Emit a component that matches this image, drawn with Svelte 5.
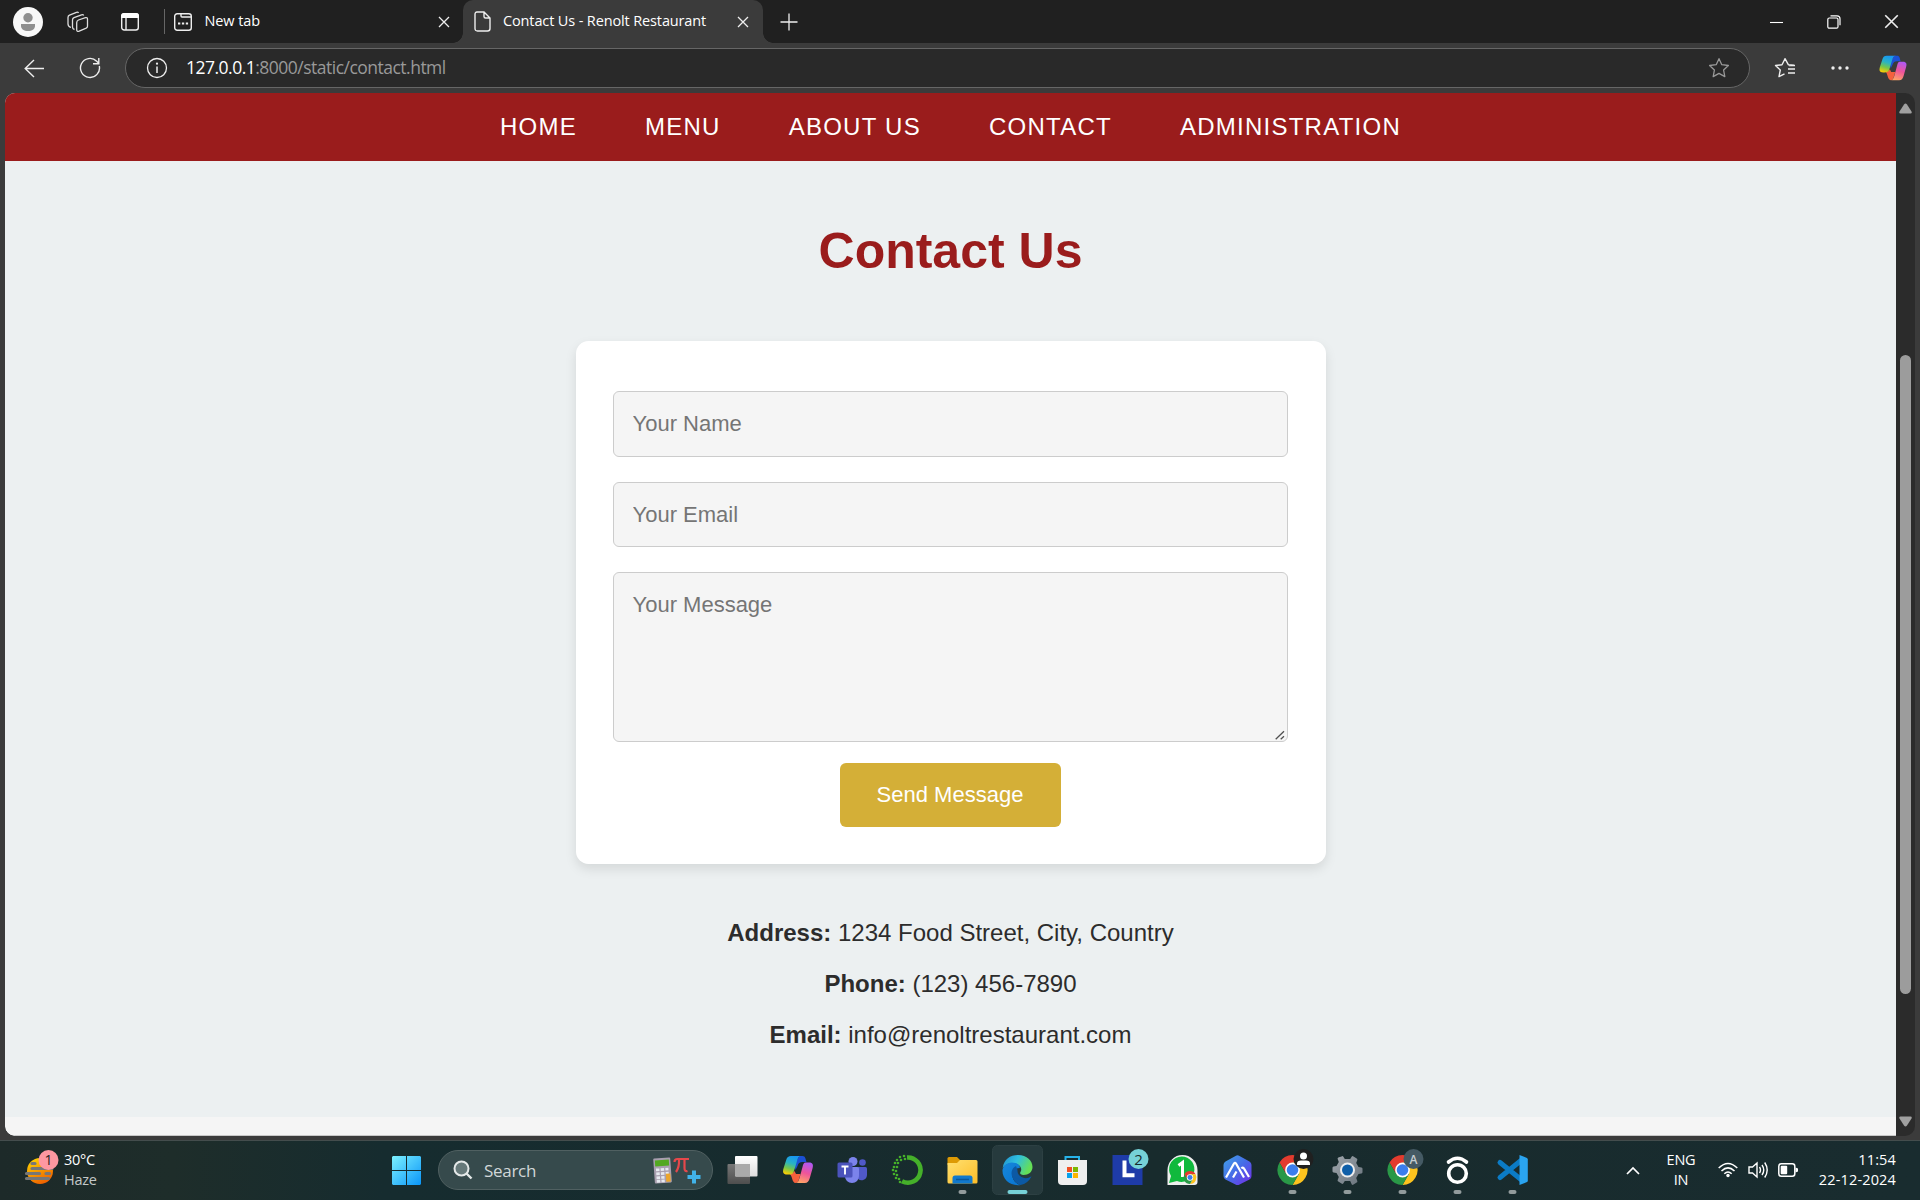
<script>
  const links = ['HOME', 'MENU', 'ABOUT US', 'CONTACT', 'ADMINISTRATION'];
  const details = [
    ['Address:', '1234 Food Street, City, Country'],
    ['Phone:', '(123) 456-7890'],
    ['Email:', 'info@renoltrestaurant.com']
  ];
  // Dots on the rotated edge of the green ring icon
  const specks = [[17, 19], [20, 16], [24, 15], [15, 22], [18, 22], [14, 26], [17, 26], [13, 29], [16, 30], [14, 33], [17, 34], [16, 37], [19, 38], [21, 19], [25, 18], [20, 41]];
</script>

{#snippet closeIcon(size)}
  <svg width={size} height={size} viewBox="0 0 12 12"><path d="M1 1l10 10M11 1L1 11" fill="none" stroke="#eee" stroke-width="1.3" /></svg>
{/snippet}

{#snippet copilot()}
  <g>
    <path d="M17 3h3c3 0 3 3 4 6H20c-3 0-4 1-5 4l-2 4-1-6z" fill="#1b50d5" />
    <path d="M7 20.500c3 0 4-1 5-2.500l1.500 3H18l-1.500 5c-1 3-1.500 4-3.500 4-3.500 0-3-7-6-9.500z" fill="#f4613d" />
    <path d="M8.500 3H19c-3 0-3.500 2-4.500 5L11.500 18C10.500 21 9 21.500 6 21.500H4.500C.5 21.500 0 19 1 15.500L3.700 7C4.600 4 6 3 8.500 3z" fill="url(#cpA)" />
    <path d="M23 9.500h3.500c4 0 4.500 2.500 3.500 6L27.300 25c-1 3.500-2.300 5-5 5H12.500c3 0 3.500-2 4.500-5l3-11c.7-3 1.300-4.500 3-4.500z" fill="url(#cpB)" />
  </g>
{/snippet}

{#snippet chrome()}
  <g transform="translate(27.5 29)">
    <path fill="#e33b2e" d="M-13-7.5A15 15 0 0 1 13-7.5H0L-6.5 3.75Z" />
    <path fill="#fcc31e" d="M13-7.5A15 15 0 0 1 0 15L6.5 3.75L0-7.5Z" />
    <path fill="#2a9847" d="M0 15A15 15 0 0 1-13-7.5L-6.5 3.75L6.5 3.75Z" />
    <circle r="7.4" fill="#fff" /><circle r="5.8" fill="#3b7ded" />
  </g>
{/snippet}

<div class="screen">
  <header class="tabs">
    <div class="tools">
      <svg class="avatar" width="30" height="30" viewBox="0 0 30 30"><circle cx="15" cy="15" r="15" fill="#f8f8f8" /><circle cx="15" cy="10.7" r="4.7" fill="#8f8f8f" /><path d="M8 17h14v2c0 3-3 5-7 5s-7-2-7-5z" fill="#8f8f8f" /></svg>
      <svg class="spaces" width="22" height="22" viewBox="0 0 22 22" fill="none" stroke="#ddd" stroke-width="1.3" stroke-linejoin="round"><path d="M11.500 9l7-2.300q2-.5 2 1.500v7q0 1.300-1.300 1.900l-7 3Q9.700 21 9.700 18.800v-7Q9.700 9.700 11.500 9zM7.500 18.500Q5.500 18 5.500 16V9q0-1.700 1.500-2.300l7.500-2.900q1.700-.5 2.200.8M4 16.500Q1 15.500 1 13V6.500Q1 4.800 2.500 4.200L9.500 1.300q1.500-.5 2 .7" /></svg>
      <svg class="panes" width="20" height="20" viewBox="0 0 20 20"><rect x="1.700" y="1.700" width="16.600" height="16.300" rx="2.500" fill="none" stroke="#eee" stroke-width="1.400" /><path d="M1 6V4q0-3 3-3h12q3 0 3 3v2z" fill="#fff" /><path d="M6 6v12" stroke="#eee" stroke-width="1.400" /></svg>
      <i class="divider"></i>
    </div>
    <div class="tab">
      <svg width="20" height="20" viewBox="0 0 20 20" fill="none" stroke="#eee" stroke-width="1.400"><rect x="1.700" y="1.700" width="16.600" height="16.600" rx="2.500" /><path d="M8 2v2q0 1 1 1h9" /><path d="M5 11.500h2.300M8.900 11.500h2.300M12.800 11.500h2.300" stroke-width="2.200" /></svg>
      <span class="newtab">New tab</span>
      {@render closeIcon(12)}
    </div>
    <div class="tab active">
      <svg width="17" height="21" viewBox="0 0 17 21" fill="none" stroke="#eee" stroke-width="1.400"><path d="M3 1h7l6 6v10.500q0 2.500-2.500 2.500h-10Q1 20 1 17.500v-14Q1 1 3 1zM10 1v4.500Q10 7 11.500 7H16" /></svg>
      <span class="title">Contact Us - Renolt Restaurant</span>
      {@render closeIcon(12)}
    </div>
    <svg class="plus" width="18" height="18" viewBox="0 0 18 18"><path d="M9 .5v17M.5 9h17" stroke="#eee" stroke-width="1.300" /></svg>
    <div class="window">
      <svg width="14" height="14" viewBox="0 0 14 14"><path d="M0 7.500h13" stroke="#fff" stroke-width="1.100" /></svg>
      <svg width="14" height="14" viewBox="0 0 14 14" fill="none" stroke="#fff" stroke-width="1.200"><rect x=".8" y="3" width="10.200" height="10.200" rx="1.500" /><path d="M3.500.8H10q3 0 3 3v6.500" /></svg>
      {@render closeIcon(15)}
    </div>
  </header>

  <div class="toolbar">
    <svg class="back" width="21" height="19" viewBox="0 0 21 19" fill="none" stroke="#eee" stroke-width="1.400"><path d="M20 9.500H1.500M10 1L1.200 9.500 10 18" /></svg>
    <svg class="reload" width="22" height="22" viewBox="0 0 22 22" fill="none" stroke="#eee" stroke-width="1.400"><path d="M20.300 9a9.500 9.500 0 1 1-2.600-4.800L19.500 6M19.800 1v5.800H14" /></svg>
    <div class="address">
      <svg width="22" height="22" viewBox="0 0 22 22"><circle cx="11" cy="11" r="9.500" fill="none" stroke="#eee" stroke-width="1.300" /><path d="M11 9.500v6.500" stroke="#eee" stroke-width="1.500" /><circle cx="11" cy="6.700" r="1.100" fill="#eee" /></svg>
      <span class="url"><b>127.0.0.1</b>:8000/static/contact.html</span>
      <svg width="22" height="22" viewBox="0 0 22 22"><path d="M11 1.700l2.800 6 6.600.8-4.800 4.500 1.200 6.600-5.800-3.200-5.800 3.200 1.200-6.600L1.600 8.500l6.600-.8z" fill="none" stroke="#999" stroke-width="1.300" stroke-linejoin="round" /></svg>
    </div>
    <svg class="fav" width="22" height="22" viewBox="0 0 22 22" fill="none" stroke="#eee" stroke-width="1.400" stroke-linejoin="round"><path d="M20 8.200l-5.700-.5L11 1.700l-3 6-6.500.8 4.800 4.500L5 19.600l5.500-2.800M14 12h7M14 16h7M15 8.500h6" /></svg>
    <svg class="dots" width="18" height="4" viewBox="0 0 18 4" fill="#eee"><circle cx="2" cy="2" r="1.700" /><circle cx="9" cy="2" r="1.700" /><circle cx="16" cy="2" r="1.700" /></svg>
    <svg class="pilot" width="28" height="28" viewBox="0 1 31 31">
      <defs>
        <linearGradient id="cpA" x1=".6" y1="0" x2=".3" y2="1"><stop offset="0" stop-color="#1795f5" /><stop offset=".4" stop-color="#29b3c5" /><stop offset=".7" stop-color="#75c64b" /><stop offset="1" stop-color="#f9ce05" /></linearGradient>
        <linearGradient id="cpB" x1=".7" y1="0" x2=".4" y2="1"><stop offset="0" stop-color="#ae58f5" /><stop offset=".5" stop-color="#ee549a" /><stop offset="1" stop-color="#ffa267" /></linearGradient>
      </defs>
      {@render copilot()}
    </svg>
  </div>

  <div class="viewport">
    <div class="page">
      <nav>
        {#each links as link}<a href="#top">{link}</a>{/each}
      </nav>
      <main>
        <h1>Contact Us</h1>
        <form>
          <input class="first" placeholder="Your Name" />
          <input placeholder="Your Email" />
          <div class="message">
            <textarea placeholder="Your Message"></textarea>
            <svg class="grip" width="10" height="10" viewBox="0 0 10 10"><path d="M.7 9.300l8.300-8M5.700 9.300L9 6.300" stroke="#505050" stroke-width="1.300" /></svg>
          </div>
          <button type="button">Send Message</button>
        </form>
        <section>
          {#each details as [label, value]}<p><strong>{label}</strong> {value}</p>{/each}
        </section>
      </main>
      <div class="below"></div>
    </div>
    <div class="scroll">
      <svg width="13" height="11" viewBox="0 0 13 11"><path d="M5 1.500Q6.500-.5 8 1.500l4.500 7q.8 2-1 2h-10q-1.800 0-1-2z" fill="#a0a0a0" /></svg>
      <i></i>
      <svg width="13" height="11" viewBox="0 0 13 11"><path d="M5 9.500Q6.500 11.500 8 9.500l4.500-7q.8-2-1-2h-10q-1.800 0-1 2z" fill="#a0a0a0" /></svg>
    </div>
  </div>

  <footer>
    <div class="weather">
      <svg width="36" height="38" viewBox="0 0 36 38">
        <defs><linearGradient id="sun" x1=".2" y1="0" x2=".7" y2="1"><stop offset="0" stop-color="#ffd400" /><stop offset="1" stop-color="#ed5b00" /></linearGradient></defs>
        <circle cx="16" cy="22" r="13" fill="url(#sun)" />
        <path d="M8 14.500h3M8 19.500h20M2.500 24.500h13M22 24.500h3.500M2.500 29.500h22" stroke="#777" stroke-width="3.200" stroke-linecap="round" />
        <circle cx="24.500" cy="11" r="10" fill="#fe97a1" /><text x="24.500" y="16" text-anchor="middle" font-size="14" fill="#222">1</text>
      </svg>
      <div><span>30°C</span><span class="dim">Haze</span></div>
    </div>

    <svg class="start" width="29" height="29" viewBox="0 0 29 29">
      <defs><linearGradient id="win" gradientUnits="userSpaceOnUse" x1="0" y1="0" x2="29" y2="29"><stop offset="0" stop-color="#7cf1ff" /><stop offset="1" stop-color="#0a95f8" /></linearGradient></defs>
      <path d="M1 0h13v14H0V1zM15 0h13l1 1v13H15zM0 15h14v14H1l-1-1zM15 15h14v13l-1 1H15z" fill="url(#win)" />
    </svg>

    <div class="search">
      <svg width="20" height="20" viewBox="0 0 20 20"><circle cx="8.500" cy="8.500" r="7" fill="#66797a" stroke="#e5e9e9" stroke-width="2" /><path d="M13.500 13.500l5 5" stroke="#e5e9e9" stroke-width="2.400" /></svg>
      <span>Search</span>
      <svg width="50" height="30" viewBox="0 0 50 30">
        <g transform="rotate(-4 10 15)"><rect x="2" y="3" width="17" height="25" rx="1" fill="#a99faf" /><rect x="3.500" y="5" width="14" height="6" fill="#52a820" />
          <path d="M4 14.500h12.500M4 18.500h12.500M4 22.500h8M4 26h8" stroke="#e6e9ef" stroke-width="2.600" stroke-dasharray="3.500 1.200" /><rect x="13.500" y="19" width="4.500" height="8" fill="#eba52c" /></g>
        <path d="M22.500 7q0-3 3-3H37M27 4.500Q27.500 12 24 17M32.500 4.500V13q0 4 3 3" fill="none" stroke="#e5484b" stroke-width="2.200" />
        <path d="M42 15.500v13M35.500 22h13" stroke="#41b3ea" stroke-width="4" />
      </svg>
    </div>

    <div class="apps">
      <svg viewBox="0 0 55 58"><defs><linearGradient id="tvA" x2="0" y2="1"><stop stop-color="#777" /><stop offset="1" stop-color="#4e4e4e" /></linearGradient><linearGradient id="tvB" x2="0" y2="1"><stop stop-color="#fff" /><stop offset="1" stop-color="#ddd" /></linearGradient></defs><rect x="12.500" y="23" width="22.500" height="20" rx="1" fill="url(#tvA)" /><rect x="20" y="15" width="22.500" height="20.500" rx="1" fill="url(#tvB)" /><path d="M20 23h15v12.500H21l-1-1z" fill="#aaa" /></svg>
      <svg viewBox="0 0 55 58"><g transform="translate(12.500 12)">{@render copilot()}</g></svg>
      <svg viewBox="0 0 55 58"><circle cx="28" cy="20.500" r="4.500" fill="#7b83eb" /><circle cx="37.500" cy="21.500" r="3.300" fill="#5059c9" /><path d="M33 26h7.500q1.500 0 1.500 1.500V34a5.500 5.500 0 0 1-9 4z" fill="#5059c9" /><path d="M20 26h12.500q1.500 0 1.500 1.500V34c0 5-3 8-7 8s-7-3-7-7z" fill="#7b83eb" /><rect x="12.500" y="21.500" width="15" height="15" rx="1.500" fill="#4b53bc" /><path d="M16.500 25.500h7M20 25.500v8" stroke="#fff" stroke-width="1.900" /></svg>
      <svg viewBox="0 0 55 58"><path d="M27 16.500a12.600 12.600 0 1 1-5 23.700" fill="none" stroke="#45b02a" stroke-width="4.600" />{#each specks as [x, y]}<circle cx={x} cy={y} r="1.300" fill="#45b02a" />{/each}</svg>
      <svg viewBox="0 0 55 58"><defs><linearGradient id="fol" x2="1" y2="1"><stop stop-color="#ffe071" /><stop offset="1" stop-color="#fdbd27" /></linearGradient></defs><path d="M12.500 17.500q0-1.500 1.500-1.500h8l3 3v5H12.500z" fill="#dd9a05" /><path d="M12.500 22H22l3-3h16q1.500 0 1.500 1.500V41q0 1.500-1.500 1.500H14q-1.500 0-1.500-1.500z" fill="url(#fol)" /><path d="M17.500 42.500V37q0-2.500 2.500-2.500h15q2.500 0 2.500 2.500v5.500z" fill="#1179cc" /><path d="M21 38.500h13" stroke="#08579c" stroke-width="1.500" /><rect class="dot" x="23.500" y="49" width="8" height="4" rx="2" /></svg>
      <svg viewBox="0 0 55 58"><defs><linearGradient id="edgeA" x2="1" y2=".4"><stop stop-color="#208ccd" /><stop offset=".5" stop-color="#2fc0df" /><stop offset="1" stop-color="#65df56" /></linearGradient><linearGradient id="edgeB" x2="1" y2="1"><stop stop-color="#1787da" /><stop offset="1" stop-color="#0874d2" /></linearGradient></defs><rect x="2.500" y="4.500" width="50" height="49" rx="5" fill="#263a3d" stroke="#2d4043" /><path d="M12.700 27C14 18 20 14 28 14c9 0 14.500 6 14.500 12 0 5-4 8-9 8-3 0-4-1.500-3-3 1.500-2 1-6-3.500-8-5-2-12 0-14.300 4z" fill="url(#edgeA)" /><path d="M12.500 29c1-6 7-9 13-7 4 1.200 5 4 4 5-4 0-8 4-7 9 1 4 4 7 8 8C20 45.500 12 38 12.500 29z" fill="url(#edgeB)" /><path d="M26 25c-6 3-6 11 0 15 5 3 11 1 15-4-6 3-14 0-13.500-7z" fill="#0c59a4" /><path d="M22.500 35c1 5 4 8 8 9 5-1 9-4 11-9-4 4-13 5-19 0z" fill="#0c59a4" /><rect x="17.500" y="49" width="20" height="4" rx="2" fill="#76d1d7" /></svg>
      <svg viewBox="0 0 55 58"><path d="M20.500 22v-6h13.500v6" fill="none" stroke="#27b3ea" stroke-width="2" /><path d="M13 19h29v21q0 4-4 4H17q-4 0-4-4z" fill="#efefef" /><path fill="#f05024" d="M22 26h5v5h-5z" /><path fill="#7db700" d="M28 26h5v5h-5z" /><path fill="#07a2ec" d="M22 32h5v5h-5z" /><path fill="#fcb602" d="M28 32h5v5h-5z" /></svg>
      <svg viewBox="0 0 55 58"><path d="M12.500 14h30v30h-30z" fill="#1e3ba8" /><path d="M24.500 19.500v14.800h10" fill="none" stroke="#fff" stroke-width="4" /><circle cx="38.500" cy="18" r="10" fill="#76d1d7" /><text x="38.500" y="23.500" text-anchor="middle" font-size="15" fill="#182a2c">2</text></svg>
      <svg viewBox="0 0 55 58"><path d="M12.500 44V29a15 15 0 1 1 30 0V41q0 3-3 3z" fill="#eee" /><path d="M14 42l2-7A12.700 12.700 0 1 1 22 40z" fill="#10b93d" /><path d="M23.500 24.500l4-3V36" fill="none" stroke="#fff" stroke-width="3" /><g transform="translate(23.200 24) scale(.43)">{@render chrome()}</g></svg>
      <svg viewBox="0 0 55 58"><defs><linearGradient id="hex" x2="1" y2="1"><stop stop-color="#41a4e7" /><stop offset=".5" stop-color="#466be7" /><stop offset="1" stop-color="#752be8" /></linearGradient></defs><path d="M25.500 15q2-1.500 4 0l10 5.500q2 1 2 3.500v11q0 2.500-2 3.500l-10 5q-2 1-4 0l-10-5q-2-1-2-3.500V24q0-2.500 2-3.500z" fill="url(#hex)" /><path d="M16 36.500l8-14q1-1.500 2 0l8 14M23 36.500l3.500-6M31.500 27.500q1.500-2 2.500 0l5 8.500" fill="none" stroke="#fff" stroke-width="2.200" /></svg>
      <svg viewBox="0 0 55 58">{@render chrome()}<circle cx="38.500" cy="18" r="10" fill="#202020" /><circle cx="38.500" cy="15" r="3.500" fill="#fff" /><path d="M32 24v-1.500q0-3 4-3h5q4 0 4 3V24z" fill="#fff" /><rect class="dot" x="23.500" y="49" width="8" height="4" rx="2" /></svg>
      <svg viewBox="0 0 55 58"><defs><linearGradient id="gear" x2="1" y2="1"><stop stop-color="#a0a7ad" /><stop offset="1" stop-color="#68727b" /></linearGradient></defs><path d="M21.500 15.500q1-.8 1.700 0l1.600 2.500h5.400l1.600-2.500q.7-.8 1.700 0l3.200 2q1 .6.600 1.600l-1.100 3 2.300 4 3 .5q1 .2 1 1.200v3.400q0 1-1 1.200l-3 .5-2.300 4 1.100 3q.4 1-.6 1.600l-3.200 2q-1 .8-1.700 0L30.200 40h-5.400l-1.600 2.500q-.7.8-1.700 0l-3.200-2q-1-.6-.6-1.600l1.100-3-2.300-4-3-.5q-1-.2-1-1.200v-3.400q0-1 1-1.200l3-.5 2.300-4-1.100-3q-.4-1 .6-1.600z" fill="url(#gear)" /><circle cx="27.500" cy="29" r="7.500" fill="#eee" /><circle cx="27.500" cy="29" r="5.500" fill="#0f5fa8" /><rect class="dot" x="23.500" y="49" width="8" height="4" rx="2" /></svg>
      <svg viewBox="0 0 55 58">{@render chrome()}<circle cx="38.500" cy="18" r="10" fill="#455a64" /><text x="38.500" y="22.500" text-anchor="middle" font-size="12" fill="#c5cdd0" font-weight="600">A</text><rect class="dot" x="23.500" y="49" width="8" height="4" rx="2" /></svg>
      <svg viewBox="0 0 55 58"><circle cx="27.500" cy="32.500" r="8.800" fill="none" stroke="#fff" stroke-width="3.600" /><path d="M18.500 21q9-7.500 18 0" fill="none" stroke="#fff" stroke-width="3.600" stroke-linecap="round" /><rect class="dot" x="23.500" y="49" width="8" height="4" rx="2" /></svg>
      <svg viewBox="0 0 55 58"><path d="M15 21.500L36 38.500M15 36.500L36 19.500" stroke="#0b7bc6" stroke-width="5" stroke-linecap="round" /><path d="M34.500 14l7.500 3q.8.500.8 1.500v21q0 1-.8 1.500l-7.500 3z" fill="#2aa4f0" /><rect class="dot" x="23.500" y="49" width="8" height="4" rx="2" /></svg>
    </div>

    <div class="tray">
      <svg class="chev" width="14" height="9" viewBox="0 0 14 9"><path d="M1 8l6-6 6 6" fill="none" stroke="#fff" stroke-width="1.700" /></svg>
      <div class="lang"><span>ENG</span><span>IN</span></div>
      <svg class="wifi" width="20" height="16" viewBox="0 0 20 16" fill="none" stroke="#fff" stroke-width="1.500"><path d="M.7 6Q10-3 19.300 6M3.500 9q6.500-6.300 13 0M6.300 11.700q3.700-3.500 7.400 0" /><circle cx="10" cy="13.500" r="1.700" fill="#fff" stroke="none" /></svg>
      <svg class="vol" width="21" height="18" viewBox="0 0 21 18" fill="none" stroke="#fff" stroke-width="1.400"><path d="M1 6h3.500L9 2v14l-4.500-4H1zM11.500 6q2 3 0 6M14 4q3.500 5 0 10M16.700 1.500q5 7.500 0 15" /></svg>
      <svg class="bat" width="20" height="14" viewBox="0 0 20 14"><rect x=".8" y=".8" width="16" height="12.400" rx="2.500" fill="none" stroke="#fff" stroke-width="1.500" /><rect x="2.700" y="2.700" width="6.500" height="8.600" rx="1" fill="#fff" /><path d="M17.500 4.500l2.500 1v3l-2.500 1z" fill="#fff" /></svg>
      <div class="clock"><span>11:54</span><span>22-12-2024</span></div>
    </div>
  </footer>
</div>

<style>
  :global(body) { margin: 0; }
  * { box-sizing: border-box; }
  svg { display: block; flex: none; }
  .screen { width: 1920px; height: 1200px; display: flex; flex-direction: column; overflow: hidden; background: #3b3b3b; font-family: "Open Sans", "Noto Sans", sans-serif; color: #fff; }

  .tabs { height: 43px; flex: none; display: flex; align-items: center; background: #202020; }
  .tools { width: 165px; display: flex; align-items: center; padding-left: 13px; }
  .spaces { margin-left: 24px; }
  .panes { margin-left: 31px; }
  .divider { width: 1px; height: 25px; flex: none; margin-left: 24px; background: #666; }
  .tab { width: 298px; height: 43px; display: flex; align-items: center; padding: 0 13px 0 8px; font-size: 14.500px; }
  .tab span { flex: 1; padding-bottom: 2px; white-space: nowrap; }
  .tab .newtab { margin-left: 11.500px; letter-spacing: -0.1px; }
  .title { margin-left: 12px; letter-spacing: -0.130px; }
  .active { position: relative; width: 300px; padding: 0 14px 0 11px; background: #3b3b3b; border-radius: 10px 10px 0 0; }
  .active::before, .active::after { content: ""; position: absolute; bottom: 0; width: 10px; height: 10px; }
  .active::before { left: -10px; background: radial-gradient(circle at 0 0, transparent 9.500px, #3b3b3b 10px); }
  .active::after { right: -10px; background: radial-gradient(circle at 100% 0, transparent 9.500px, #3b3b3b 10px); }
  .plus { margin-left: 17px; }
  .window { margin-left: auto; display: flex; align-items: center; gap: 43px; padding-right: 21px; }

  .toolbar { height: 50px; flex: none; display: flex; align-items: center; }
  .back { margin-left: 24px; }
  .reload { margin-left: 34px; }
  .address { width: 1625px; height: 40px; margin-left: 24px; display: flex; align-items: center; padding: 0 19px 0 20px; border: 1px solid #666; border-radius: 20px; background: #292929; }
  .url { flex: 1; margin-left: 18px; padding-bottom: 2px; font-size: 17.500px; letter-spacing: -0.510px; color: #999; }
  .url b { font-weight: 400; color: #fff; }
  .fav { margin-left: 24px; }
  .dots { margin-left: 35px; }
  .pilot { margin-left: 30px; }

  .viewport { height: 1043px; flex: none; width: 1910px; margin-left: 5px; display: flex; border-radius: 10px; overflow: hidden; background: #2b2b2b; font-family: "Liberation Sans", Arial, sans-serif; }
  .page { width: 1891px; background: #ecf0f1; display: flex; flex-direction: column; border-radius: 0 0 0 10px; overflow: hidden; }
  nav { height: 68px; flex: none; display: flex; justify-content: center; align-items: center; gap: 68px; background: #9a1c1c; }
  nav a { color: #fff; text-decoration: none; font-size: 24px; letter-spacing: 1.250px; }
  main { flex: 1; display: flex; flex-direction: column; align-items: center; }
  h1 { margin: 57px 0 0; font-size: 50px; line-height: 66px; color: #9a1c1c; }
  form { width: 750px; height: 523px; margin-top: 57px; padding: 50px 38px 37px 37px; display: flex; flex-direction: column; align-items: center; background: #fff; border-radius: 12.500px; box-shadow: 0 5px 12px rgba(0, 0, 0, 0.1); }
  input, textarea { width: 675px; margin: 0 0 25px; padding: 17px 19px; border: 1px solid #ccc; border-radius: 6px; background: #f5f5f5; font: 22px "Liberation Sans", Arial, sans-serif; outline: 0; }
  input { height: 65px; flex: none; }
  .first { height: 66px; }
  .message { position: relative; height: 170px; flex: none; margin-bottom: 21px; }
  textarea { display: block; height: 170px; margin: 0; padding-top: 19px; resize: none; }
  .grip { position: absolute; right: 3px; bottom: 2px; }
  input::placeholder, textarea::placeholder { color: #757575; }
  button { width: 221px; height: 64px; flex: none; border: 0; border-radius: 6px; background: #d4af37; color: #fff; font: 22px "Liberation Sans", Arial, sans-serif; }
  section { margin-top: 50px; color: #2c2c2c; font-size: 24px; text-align: center; }
  p { margin: 0 0 12.500px; line-height: 38.400px; }
  .below { height: 19px; flex: none; background: #f5f5f5; border-bottom: 1px solid #c8c8c8; }
  .scroll { width: 19px; display: flex; flex-direction: column; align-items: center; padding: 10px 0 9px; }
  .scroll i { width: 11px; height: 639px; margin: 241px 0 auto; border-radius: 6px; background: #9c9c9c; }

  footer { height: 60px; margin-top: 4px; flex: none; display: flex; align-items: center; padding-bottom: 1px; border-top: 1px solid #444d4d; background: linear-gradient(90deg, #1d2a29, #1e2d2a 9%, #162c2f 20%, #182b2d 60%, #192c2f); font-size: 14.500px; }
  .weather { width: 392px; display: flex; align-items: center; padding-left: 24px; }
  .weather svg { margin-top: -5px; }
  .weather div, .lang, .clock { display: flex; flex-direction: column; line-height: 20px; padding-bottom: 1px; }
  .weather div { margin-left: 4px; letter-spacing: -0.3px; }
  .dim { color: #c3c8c8; }
  .search { width: 275px; height: 40px; margin-left: 17px; display: flex; align-items: center; padding: 0 10px 0 14px; border: 1px solid #506061; border-radius: 20px; background: #364a4c; font-size: 17px; color: #d1d7d8; }
  .search span { flex: 1; margin-left: 11px; letter-spacing: -0.3px; }
  .apps { display: flex; margin-left: 1.500px; }
  .apps svg { width: 55px; height: 58px; }
  .dot { fill: #929b9c; }
  .tray { margin-left: auto; display: flex; align-items: center; padding-right: 24px; }
  .lang { width: 30px; margin-left: 26px; text-align: center; align-items: center; letter-spacing: -0.2px; }
  .wifi { margin-left: 22px; }
  .vol { margin-left: 10px; }
  .bat { margin-left: 9px; }
  .clock { width: 98px; text-align: right; letter-spacing: 0.150px; }
</style>
